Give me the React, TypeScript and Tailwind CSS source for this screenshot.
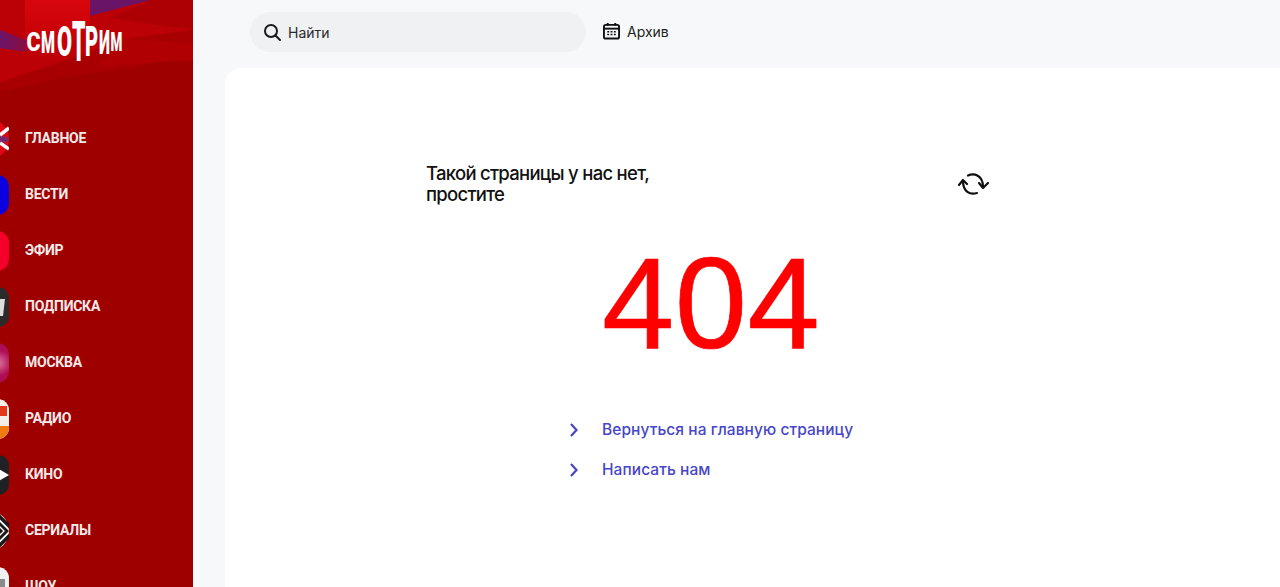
import React from "react";

function Glavnoe() {
  return (
    <svg viewBox="0 0 40 40" className="w-10 h-10">
      <circle cx="20" cy="20" r="20" fill="#e30613" />
      <path d="M30 16l10 3v3l-10 3z" fill="#7a2a6a" />
      <path d="M31 16L40 9M31 24L40 30" stroke="#fff" strokeWidth="3.5" fill="none" />
    </svg>
  );
}

function Vesti() {
  return <div className="w-10 h-10 rounded-xl bg-[#0a00e0]" />;
}

function Efir() {
  return <div className="w-10 h-10 rounded-xl bg-[#f4002a]" />;
}

function Podpiska() {
  return (
    <svg viewBox="0 0 40 40" className="w-10 h-10">
      <rect width="40" height="40" rx="11" fill="#2b2b2b" />
      <path d="M30 12h6l-2 17h-4z" fill="#ddd" />
    </svg>
  );
}

function Moskva() {
  return (
    <div className="w-10 h-10 rounded-xl bg-[radial-gradient(circle_at_30px_20px,#d8709a_0,#b00e56_35%,#960a48_100%)]" />
  );
}

function Radio() {
  return (
    <svg viewBox="0 0 40 40" className="w-10 h-10">
      <rect width="40" height="40" rx="11" fill="#f4efe9" />
      <path d="M28 7h10v10H28z" fill="#e5391c" />
      <path d="M0 27h40v2a11 11 0 0 1-11 11H11A11 11 0 0 1 0 29z" fill="#f07a12" />
    </svg>
  );
}

function Kino() {
  return (
    <svg viewBox="0 0 40 40" className="w-10 h-10">
      <rect width="40" height="40" rx="11" fill="#1f2225" />
      <path d="M26 12 L40 20 L26 28z" fill="#fff" />
    </svg>
  );
}

function Serialy() {
  return (
    <svg viewBox="0 0 40 40" className="w-10 h-10">
      <circle cx="20" cy="20" r="20" fill="#fff" />
      <path d="M20 -5 L45 20 L20 45 L-5 20z" fill="none" stroke="#1a1a1a" strokeWidth="3.5" />
      <path d="M20 2 L38 20 L20 38 L2 20z" fill="none" stroke="#1a1a1a" strokeWidth="3" />
      <path d="M20 8 L32 20 L20 32 L8 20z" fill="none" stroke="#1a1a1a" strokeWidth="3" />
    </svg>
  );
}

function Shou() {
  return (
    <svg viewBox="0 0 40 40" className="w-10 h-10">
      <rect width="40" height="40" rx="11" fill="#f2f2f2" />
      <rect x="22" y="12" width="14" height="22" fill="#8a8a8a" />
    </svg>
  );
}

const navItems = [
  { label: "ГЛАВНОЕ", icon: <Glavnoe /> },
  { label: "ВЕСТИ", icon: <Vesti /> },
  { label: "ЭФИР", icon: <Efir /> },
  { label: "ПОДПИСКА", icon: <Podpiska /> },
  { label: "МОСКВА", icon: <Moskva /> },
  { label: "РАДИО", icon: <Radio /> },
  { label: "КИНО", icon: <Kino /> },
  { label: "СЕРИАЛЫ", icon: <Serialy /> },
  { label: "ШОУ", icon: <Shou /> },
];

function Logo() {
  return (
    <div className="flex items-center font-['Roboto',sans-serif] font-black text-white leading-none">
      <div className="w-[15px] flex justify-center"><span className="text-[26px] scale-x-[0.82]">С</span></div>
      <div className="w-[15px] flex justify-center"><span className="text-[32px] scale-x-[0.5]">М</span></div>
      <div className="w-[16px] flex justify-center"><span className="text-[42px] scale-x-[0.52]">О</span></div>
      <div className="w-[13px] flex justify-center"><span className="text-[56px] scale-x-[0.38]">Т</span></div>
      <div className="w-[13px] flex justify-center"><span className="text-[42px] scale-x-[0.48]">Р</span></div>
      <div className="w-[12px] flex justify-center"><span className="text-[33px] scale-x-[0.48]">И</span></div>
      <div className="w-[12px] flex justify-center"><span className="text-[26px] scale-x-[0.52]">М</span></div>
    </div>
  );
}

function Sidebar() {
  return (
    <aside className="relative w-[193px] shrink-0 h-full bg-[#9e0000] overflow-hidden">
      <svg viewBox="0 0 193 120" className="absolute top-0 left-0 w-[193px] h-[120px]">
        <defs>
          <linearGradient id="column" x1="0" y1="0" x2="0" y2="1">
            <stop offset="0" stopColor="#d8060c" />
            <stop offset="1" stopColor="#bb0006" />
          </linearGradient>
          <linearGradient id="wedge" x1="0" y1="0" x2="1" y2="0">
            <stop offset="0" stopColor="#6a1468" />
            <stop offset="1" stopColor="#8a0c40" />
          </linearGradient>
        </defs>
        <polygon points="0,0 193,0 193,55 130,68 60,78 0,92" fill="#a80002" />
        <polygon points="0,0 193,0 193,30 130,38 60,62 0,82" fill="#bb0006" />
        <polygon points="25,0 90,0 90,22 60,60 25,62" fill="url(#column)" />
        <polygon points="90,16 150,0 90,0" fill="#6a1468" />
        <polygon points="0,30 26,40 26,52 0,48" fill="url(#wedge)" />
        <polygon points="150,0 193,0 193,30 110,18" fill="#ad0004" />
        <polygon points="120,38 193,44 193,60 100,66" fill="#b00004" />
      </svg>
      <div className="relative flex items-center h-[84px] pl-[26px]">
        <Logo />
      </div>
      <nav className="relative flex flex-col gap-4 mt-[35px]">
        {navItems.map((item) => (
          <div key={item.label} className="flex items-center gap-4 -ml-[31px] h-10">
            {item.icon}
            <span className="font-['Roboto',sans-serif] font-bold text-[14px] tracking-[-0.25px] -mt-[1px] text-[#f6e9e9]">
              {item.label}
            </span>
          </div>
        ))}
      </nav>
    </aside>
  );
}

function LinkChevron() {
  return (
    <svg viewBox="0 0 14 18" className="w-[14px] h-[18px] shrink-0" fill="none" stroke="currentColor" strokeWidth="2.2">
      <path d="M5 3 L10.5 9 L5 15" />
    </svg>
  );
}

export default function App() {
  return (
    <div className="flex w-[1280px] h-[587px] overflow-hidden bg-[#f7f8f9] font-['Inter',sans-serif]">
      <Sidebar />
      <div className="flex-1 flex flex-col min-w-0">
        <header className="flex items-center h-[68px] pl-[57px] pb-[4px] gap-[17px]">
          <div className="flex items-center w-[336px] h-10 rounded-full bg-[#f0f1f3] pl-[13px] gap-[7px]">
            <svg viewBox="0 0 18 18" className="w-[18px] h-[18px]" fill="none" stroke="#1a1a1a" strokeWidth="2">
              <circle cx="8" cy="8" r="6" />
              <path d="M12.5 12.5 L17 17" strokeLinecap="round" />
            </svg>
            <span className="text-[14px] text-[#2a2a2a]">Найти</span>
          </div>
          <div className="flex items-center gap-[7px] -mt-[2px]">
            <svg viewBox="0 0 18 18" className="w-[17px] h-[18px]" fill="none">
              <rect x="1" y="2.5" width="16" height="14.5" rx="2" stroke="#111" strokeWidth="2" />
              <path d="M1 6.5h16" stroke="#111" strokeWidth="2" />
              <path d="M5 0.5v3M13 0.5v3" stroke="#111" strokeWidth="2" />
              <path d="M4.5 9h2v1.6h-2zM8 9h2v1.6H8zM11.5 9h2v1.6h-2zM4.5 12h2v1.6h-2zM8 12h2v1.6H8zM11.5 12h2v1.6h-2z" fill="#111" />
            </svg>
            <span className="text-[14px] text-[#222]">Архив</span>
          </div>
        </header>
        <main className="flex-1 ml-[32px] bg-white rounded-tl-2xl pl-[201px] pt-[95px]">
          <div className="flex items-start justify-between w-[564px]">
            <h1 className="text-[18.5px] leading-[21px] font-medium tracking-[-0.72px] text-[#111] w-[240px]">
              Такой страницы у нас нет, простите
            </h1>
            <svg viewBox="0 0 32 24" className="w-8 h-6 mt-[9px]" fill="none" stroke="#111" strokeWidth="2.2" strokeLinecap="round" strokeLinejoin="round">
              <path d="M10 3.5 C16 1 25 3 25 15" />
              <path d="M21 11 L25 16 L30 11" />
              <path d="M19 21 C12 23 5 20 5 9" />
              <path d="M1 13 L5 8 L9 12" />
            </svg>
          </div>
          <div className="font-['Liberation_Sans',sans-serif] text-[#ff0000] text-[130px] leading-none tracking-[0.4px] [-webkit-text-stroke:0.7px_#ff0000] mt-[33px] ml-[176px]">
            404
          </div>
          <ul className="mt-[51px] ml-[140px] flex flex-col gap-[18px]">
            <li className="flex items-center h-[22px] gap-[22px] text-[15.5px] tracking-[0.07px] font-medium text-[#4646c8]">
              <LinkChevron />
              Вернуться на главную страницу
            </li>
            <li className="flex items-center h-[22px] gap-[22px] text-[15.5px] tracking-[0.07px] font-medium text-[#4646c8]">
              <LinkChevron />
              Написать нам
            </li>
          </ul>
        </main>
      </div>
    </div>
  );
}
